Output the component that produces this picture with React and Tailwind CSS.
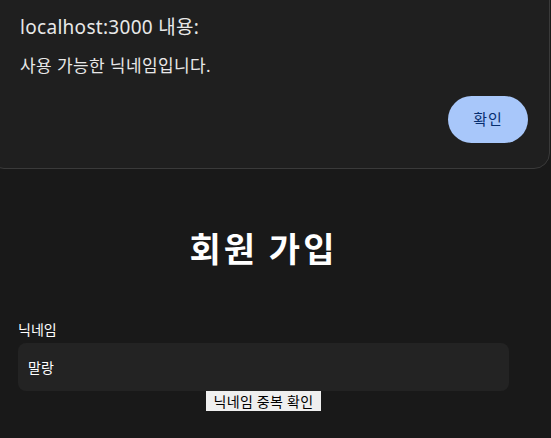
export default function App() {
  return (
    <div className="relative min-h-[438px] bg-[#191919] font-['Noto_Sans','Noto_Sans_CJK_KR',sans-serif] overflow-hidden">
      {/* browser alert */}
      <div className="absolute top-[-20px] left-[-12px] right-[1px] z-10 rounded-b-[16px] border border-[#3a3a3a] bg-[#1f1f1f] pt-[34px] pb-[25px] pl-[31px] pr-[21px]">
        <div className="text-[19px] leading-[24px] tracking-[0.3px] text-[#e8e8e8]">localhost:3000 내용:</div>
        <div className="mt-[15px] text-[17px] leading-[24px] tracking-[0.4px] text-[#e8e8e8]">사용 가능한 닉네임입니다.</div>
        <div className="mt-[18px] flex justify-end">
          <button className="h-[47px] w-[80px] rounded-full bg-[#a8c7fa] text-[15px] tracking-[1px] text-[#062e6f]">확인</button>
        </div>
      </div>

      <div className="w-[491px] ml-[18px] pt-[223px] font-['Noto_Sans_CJK_KR',sans-serif]">
        <h1 className="text-center text-[34px] font-bold leading-[50px] tracking-[3px] text-white">회원 가입</h1>
        <div className="mt-[46px] text-[14px] leading-[20px] text-white">닉네임</div>
        <input
          className="mt-[4px] block h-[48px] w-full rounded-[8px] bg-[#232323] px-[10px] text-[14px] text-white outline-none"
          defaultValue="말랑"
        />
        <div className="flex justify-center">
          <button className="h-[20px] bg-[#efefef] px-[7px] text-[14px] leading-[20px] tracking-[0.4px] text-black">닉네임 중복 확인</button>
        </div>
      </div>
    </div>
  );
}
